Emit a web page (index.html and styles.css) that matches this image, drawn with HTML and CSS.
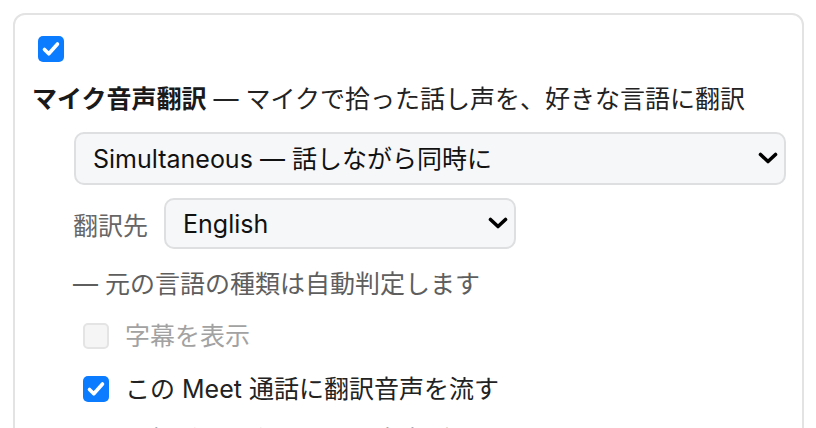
FILE: index.html
```html
<!DOCTYPE html>
<html lang="ja">
<head>
<meta charset="utf-8">
<title>マイク音声翻訳</title>
<link rel="stylesheet" href="styles.css">
</head>
<body>
<div class="card">
  <div class="enable">
    <span class="box checked"><svg viewBox="0 0 26 26" width="26" height="26"><path d="M6.5 13.5 L10.8 17.8 L19.5 8" fill="none" stroke="#fff" stroke-width="3.6" stroke-linecap="round" stroke-linejoin="round"/></svg></span>
  </div>
  <div class="title"><strong>マイク音声翻訳</strong> — マイクで拾った話し声を、好きな言語に翻訳</div>
  <div class="opts">
    <div class="select wide">
      <select class="sel"><option>Simultaneous — 話しながら同時に</option></select>
      <svg class="chev" viewBox="0 0 20 12" width="20" height="12"><path d="M2.5 2.5 L10 9.5 L17.5 2.5" fill="none" stroke="#000" stroke-width="3.6" stroke-linecap="round" stroke-linejoin="round"/></svg>
    </div>
    <div class="row">
      <span class="lbl">翻訳先</span>
      <div class="select narrow">
        <select class="sel"><option>English</option></select>
        <svg class="chev" viewBox="0 0 20 12" width="20" height="12"><path d="M2.5 2.5 L10 9.5 L17.5 2.5" fill="none" stroke="#000" stroke-width="3.6" stroke-linecap="round" stroke-linejoin="round"/></svg>
      </div>
    </div>
    <div class="note">— 元の言語の種類は自動判定します</div>
    <div class="check disabled"><span class="box off"></span><span>字幕を表示</span></div>
    <div class="check"><span class="box checked"><svg viewBox="0 0 26 26" width="26" height="26"><path d="M6.5 13.5 L10.8 17.8 L19.5 8" fill="none" stroke="#fff" stroke-width="3.6" stroke-linecap="round" stroke-linejoin="round"/></svg></span><span>この Meet 通話に翻訳音声を流す</span></div>
    <div class="hint">相手には翻訳された音声が届きます</div>
  </div>
</div>
</body>
</html>
```
FILE: styles.css
```css
html, body {
  margin: 0;
  padding: 0;
  background: #fff;
  overflow: hidden;
}
body {
  font-family: "Inter", "Noto Sans CJK JP", sans-serif;
  font-size: 25px;
  color: #1f1f1f;
  height: 428px;
}
.card {
  margin: 13px 0 0 13px;
  width: 770px;
  height: 600px;
  border: 2px solid #e3e3e3;
  border-radius: 12px;
  padding: 21px 0 0 17px;
}
.enable {
  display: flex;
  height: 26px;
  margin-left: 6px;
}
.box {
  display: inline-flex;
  width: 26px;
  height: 26px;
  border-radius: 5px;
  box-sizing: border-box;
  flex: none;
}
.box.checked {
  background: #0b7bff;
}
.box.off {
  background: #f5f5f5;
  border: 2px solid #e4e4e4;
}
.title {
  margin-top: 19px;
  line-height: 36px;
  height: 36px;
  color: #222;
  white-space: nowrap;
}
.title strong {
  font-weight: 700;
  color: #1a1a1a;
}
.opts {
  margin-top: 15px;
  padding-left: 42px;
  display: flex;
  flex-direction: column;
  align-items: flex-start;
}
.select {
  position: relative;
  display: flex;
}
.sel {
  appearance: none;
  -webkit-appearance: none;
  font-family: inherit;
  font-size: 25px;
  color: #111;
  background: #f6f7f9;
  border: 2px solid #dedfe1;
  border-radius: 10px;
  padding: 0 40px 0 17px;
  margin: 0;
  outline: none;
}
.wide .sel {
  width: 712px;
  height: 53px;
}
.narrow .sel {
  width: 352px;
  height: 51px;
}
.chev {
  position: absolute;
  right: 8px;
  top: 50%;
  margin-top: -7px;
  pointer-events: none;
}
.row {
  display: flex;
  align-items: center;
  margin-top: 13px;
  margin-left: -1px;
  gap: 16px;
}
.lbl {
  color: #666;
  width: 75px;
  white-space: nowrap;
}
.note {
  margin-top: 17px;
  margin-left: -1px;
  line-height: 36px;
  color: #5e5e5e;
}
.check {
  display: flex;
  align-items: center;
  gap: 16px;
  margin-left: 9px;
  line-height: 36px;
  height: 36px;
  margin-top: 16px;
  color: #222;
}
.check + .check {
  margin-top: 17px;
}
.check.disabled {
  color: #a2a2a2;
}
.hint {
  margin-top: 15px;
  margin-left: 76px;
  line-height: 36px;
  color: #666;
}
```
